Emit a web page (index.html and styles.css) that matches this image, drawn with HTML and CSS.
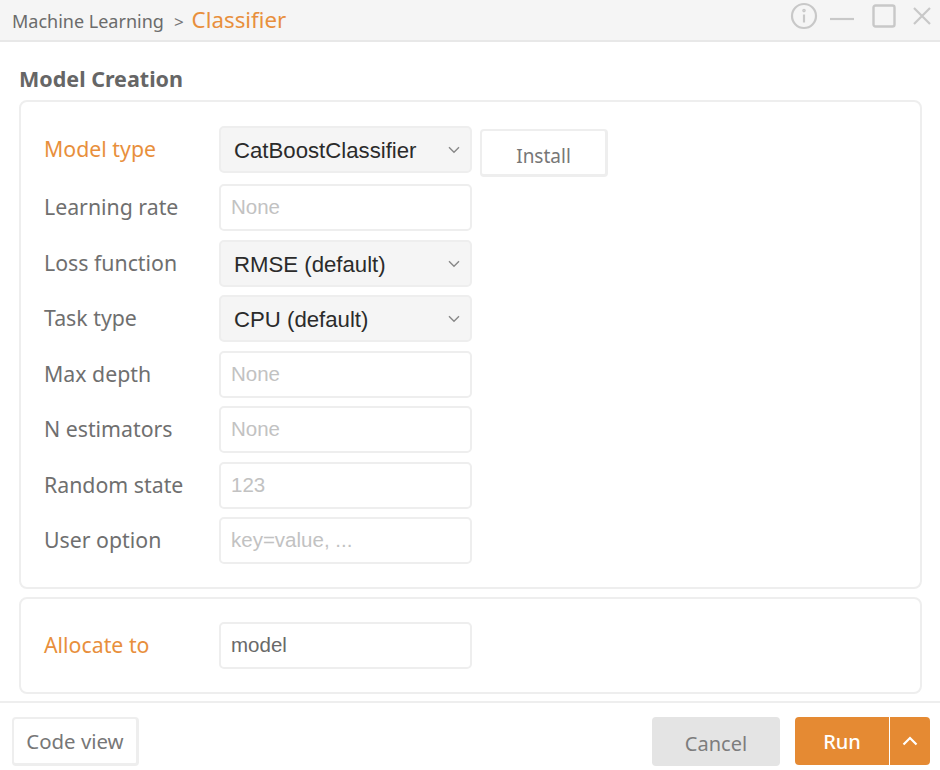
FILE: index.html
```html
<!DOCTYPE html>
<html lang="en">
<head>
    <meta charset="UTF-8">
    <title>Classifier</title>
    <link rel="stylesheet" href="styles.css">
</head>
<body>
<div class="dialog">
    <div class="titlebar">
        <div class="crumbs">
            <span class="crumb">Machine Learning</span>
            <span class="crumb-sep">&gt;</span>
            <span class="crumb-current">Classifier</span>
        </div>
        <div class="window-icons">
            <svg class="icon-info" width="28" height="28" viewBox="0 0 28 28" fill="none" stroke="#c8c8c8" stroke-width="2.2">
                <circle cx="14" cy="14" r="12"/>
                <path d="M14 12.5v8"/>
                <circle cx="14" cy="8.6" r="0.7"/>
            </svg>
            <svg class="icon-min" width="26" height="26" viewBox="0 0 26 26" fill="none" stroke="#c8c8c8" stroke-width="2.2">
                <path d="M1 16h24"/>
            </svg>
            <svg class="icon-max" width="24" height="24" viewBox="0 0 24 24" fill="none" stroke="#c8c8c8" stroke-width="2.4">
                <rect x="1.5" y="1.5" width="21" height="21" rx="2"/>
            </svg>
            <svg class="icon-close" width="20" height="20" viewBox="0 0 20 20" fill="none" stroke="#c8c8c8" stroke-width="2.2">
                <path d="M2 2l16 16M18 2L2 18"/>
            </svg>
        </div>
    </div>

    <div class="content">
        <h2 class="section-title">Model Creation</h2>
        <div class="panel panel-main">
            <div class="row">
                <label class="field-label accent">Model type</label>
                <div class="select-wrap">
                    <select class="field field-select"><option>CatBoostClassifier</option></select>
                    <svg class="chevron" width="12" height="8" viewBox="0 0 12 8" fill="none" stroke="#888" stroke-width="1.4"><path d="M1 1.2l5 5 5-5"/></svg>
                </div>
                <button class="btn btn-install">Install</button>
            </div>
            <div class="row">
                <label class="field-label">Learning rate</label>
                <input class="field" placeholder="None">
            </div>
            <div class="row">
                <label class="field-label">Loss function</label>
                <div class="select-wrap">
                    <select class="field field-select"><option>RMSE (default)</option></select>
                    <svg class="chevron" width="12" height="8" viewBox="0 0 12 8" fill="none" stroke="#888" stroke-width="1.4"><path d="M1 1.2l5 5 5-5"/></svg>
                </div>
            </div>
            <div class="row">
                <label class="field-label">Task type</label>
                <div class="select-wrap">
                    <select class="field field-select"><option>CPU (default)</option></select>
                    <svg class="chevron" width="12" height="8" viewBox="0 0 12 8" fill="none" stroke="#888" stroke-width="1.4"><path d="M1 1.2l5 5 5-5"/></svg>
                </div>
            </div>
            <div class="row">
                <label class="field-label">Max depth</label>
                <input class="field" placeholder="None">
            </div>
            <div class="row">
                <label class="field-label">N estimators</label>
                <input class="field" placeholder="None">
            </div>
            <div class="row">
                <label class="field-label">Random state</label>
                <input class="field" placeholder="123">
            </div>
            <div class="row">
                <label class="field-label">User option</label>
                <input class="field" placeholder="key=value, ...">
            </div>
        </div>

        <div class="panel panel-allocate">
            <div class="row">
                <label class="field-label accent">Allocate to</label>
                <input class="field" value="model">
            </div>
        </div>
    </div>

    <div class="footer">
        <button class="btn btn-code">Code view</button>
        <div class="footer-right">
            <button class="btn btn-cancel">Cancel</button>
            <div class="run-group">
                <button class="btn btn-run">Run</button>
                <button class="btn btn-run-more">
                    <svg width="16" height="10" viewBox="0 0 16 10" fill="none" stroke="#fff" stroke-width="2.2"><path d="M1.5 8.5L8 2l6.5 6.5"/></svg>
                </button>
            </div>
        </div>
    </div>
</div>
</body>
</html>
```

FILE: styles.css
```css
* {
    box-sizing: border-box;
}
body {
    margin: 0;
    background-color: #fff;
    font-family: "Noto Sans", "Noto Sans CJK KR", sans-serif;
    color: #696969;
}
.dialog {
    width: 940px;
    height: 770px;
    display: flex;
    flex-direction: column;
    overflow: hidden;
}
.titlebar {
    flex: none;
    height: 42px;
    padding: 0 8px 0 12px;
    display: flex;
    align-items: center;
    justify-content: space-between;
    background-color: #f5f5f5;
    border-bottom: 2px solid #e8e8e8;
}
.crumbs {
    display: flex;
    align-items: baseline;
    margin-bottom: 2px;
}
.crumb {
    font-size: 18px;
    color: #6b6b6b;
}
.crumb-sep {
    margin-left: 10px;
    font-size: 17px;
    color: #777;
}
.crumb-current {
    margin-left: 8px;
    font-size: 22.3px;
    color: #e88f3c;
}
.window-icons {
    display: flex;
    align-items: center;
    margin-bottom: 8px;
}
.icon-min {
    margin-left: 11px;
}
.icon-max {
    margin-left: 17px;
}
.icon-close {
    margin-left: 16px;
}
.content {
    flex: 1;
    padding: 22px 18px 0 19px;
}
.section-title {
    margin: 0 0 7px;
    height: 29px;
    line-height: 29px;
    font-size: 21.5px;
    font-weight: 700;
    color: #666;
}
.panel {
    border: 2px solid #eee;
    border-radius: 8px;
    padding: 0 23px;
    display: flex;
    flex-direction: column;
    gap: 8.5px;
}
.panel-main {
    height: 489px;
    padding-top: 24px;
}
.panel-allocate {
    height: 97px;
    margin-top: 8px;
    padding-top: 23px;
}
.panel-main .row:first-child {
    margin-bottom: 2.5px;
}
.row {
    height: 47px;
    display: flex;
    align-items: center;
}
.field-label {
    width: 175px;
    padding-bottom: 2px;
    font-size: 21.3px;
    color: #6f6f6f;
}
.accent {
    color: #e88f3c;
}
.field {
    width: 253px;
    height: 47px;
    padding: 0 10px 1px;
    border: 2px solid #eee;
    border-radius: 5px;
    background-color: #fff;
    font-family: "Liberation Sans", Arial, sans-serif;
    font-size: 20.5px;
    color: #696969;
    outline: none;
}
.field::placeholder {
    color: #c2c2c2;
    opacity: 1;
}
.select-wrap {
    position: relative;
    width: 253px;
    height: 47px;
}
.field-select {
    appearance: none;
    padding: 2px 10px 0 13px;
    background-color: #f5f5f5;
    font-size: 22.2px;
    color: #2b2b2b;
}
.chevron {
    position: absolute;
    top: 20px;
    right: 12px;
}
.btn {
    font-family: "Noto Sans", "Noto Sans CJK KR", sans-serif;
    font-size: 20px;
    border: none;
    border-radius: 4px;
    cursor: pointer;
}
.btn-install {
    width: 128px;
    height: 48px;
    margin: 7px 0 0 8px;
    padding-top: 7px;
    background-color: #fff;
    color: #777;
    font-size: 19px;
    border: 2px solid #eee;
    border-bottom-width: 3px;
    border-right-width: 3px;
}
.footer {
    flex: none;
    height: 69px;
    padding: 14px 10px 0 12px;
    display: flex;
    align-items: flex-start;
    justify-content: space-between;
    border-top: 2px solid #eee;
}
.footer-right {
    display: flex;
    gap: 15px;
}
.btn-code {
    width: 127px;
    height: 49px;
    background-color: #fff;
    color: #777;
    font-size: 20.4px;
    border: 2px solid #eee;
    border-bottom-width: 3px;
    border-right-width: 3px;
}
.btn-cancel {
    width: 128px;
    height: 49px;
    padding-top: 4px;
    background-color: #e4e4e4;
    color: #7d7d7d;
}
.run-group {
    display: flex;
}
.btn-run {
    width: 94px;
    height: 48px;
    padding-top: 2px;
    background-color: #e58a33;
    color: #fff;
    font-weight: 500;
    border-radius: 4px 0 0 4px;
}
.btn-run-more {
    width: 40px;
    height: 48px;
    margin-left: 1px;
    padding: 0;
    display: flex;
    align-items: center;
    justify-content: center;
    background-color: #e58a33;
    border-radius: 0 4px 4px 0;
}
```
